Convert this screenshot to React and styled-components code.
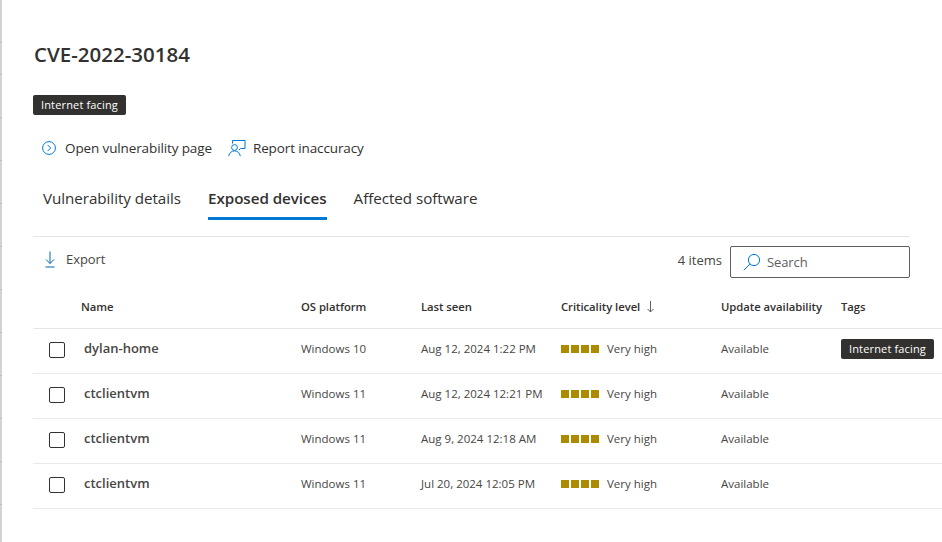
import React from 'react'
import styled, { createGlobalStyle } from 'styled-components'

const devices = [
    { name: 'dylan-home', os: 'Windows 10', seen: 'Aug 12, 2024 1:22 PM', internetFacing: true },
    { name: 'ctclientvm', os: 'Windows 11', seen: 'Aug 12, 2024 12:21 PM' },
    { name: 'ctclientvm', os: 'Windows 11', seen: 'Aug 9, 2024 12:18 AM' },
    { name: 'ctclientvm', os: 'Windows 11', seen: 'Jul 20, 2024 12:05 PM' },
]

const columns = '48px 220px 120px 140px 160px 120px 1fr'

const GlobalStyle = createGlobalStyle`
    html, body {
        margin: 0;
        padding: 0;
        background: #fff;
        overflow: hidden;
    }
    body {
        font-family: "Open Sans", "Noto Sans", sans-serif;
        color: #323130;
    }
`

const Page = styled.div`
    display: flex;
    width: 942px;
    height: 542px;
    overflow: hidden;
`

const Rail = styled.div`
    flex: 0 0 2px;
    background:
        linear-gradient(to bottom, #d2d2d2 0, #d2d2d2 42px, #bdbdbd 42px, #bdbdbd 43px, transparent 43px),
        repeating-linear-gradient(to bottom, #d2d2d2 0, #d2d2d2 31px, #bdbdbd 31px, #bdbdbd 32px, #d2d2d2 32px, #d2d2d2 43px);
`

const Main = styled.main`
    flex: 1;
    min-width: 0;
    padding: 42px 0 0 31px;
`

const Title = styled.h1`
    margin: 0 0 0 1px;
    font-size: 20.5px;
    line-height: 25px;
    font-weight: 600;
`

const Tag = styled.span`
    display: inline-block;
    height: 20px;
    padding: 0 8px;
    border-radius: 2px;
    background: #323130;
    color: #fff;
    font-size: 11px;
    line-height: 20px;
    letter-spacing: 0.15px;
    white-space: nowrap;
`

const TagRow = styled.div`
    display: flex;
    margin-top: 28px;
    height: 20px;
`

const Actions = styled.div`
    display: flex;
    align-items: center;
    gap: 16px;
    margin: 21px 0 0 9px;
    height: 24px;
`

const Action = styled.div`
    display: flex;
    align-items: center;
    gap: ${(p) => p.$gap}px;
    font-size: 13.5px;
    letter-spacing: -0.12px;
    white-space: nowrap;
`

const Tabs = styled.div`
    display: flex;
    gap: 27px;
    margin: 27px 0 0 10px;
`

const TabItem = styled.div`
    padding-bottom: 8px;
    font-size: 15.2px;
    line-height: 22px;
    font-weight: ${(p) => (p.$active ? 600 : 400)};
    letter-spacing: -0.05px;
    border-bottom: 3px solid ${(p) => (p.$active ? '#0078d4' : 'transparent')};
`

const Toolbar = styled.div`
    display: flex;
    align-items: center;
    justify-content: space-between;
    width: 877px;
    height: 46px;
    margin-top: 16px;
    border-top: 1px solid #e5e5e5;
`

const ExportButton = styled.div`
    display: flex;
    align-items: center;
    gap: 11px;
    margin: -2px 0 0 12px;
    font-size: 13px;
    letter-spacing: -0.05px;
    color: #484644;
`

const ToolbarRight = styled.div`
    display: flex;
    align-items: center;
    gap: 8px;
    margin-top: 4px;
`

const Count = styled.span`
    font-size: 13px;
    color: #484644;
    margin-top: -4px;
`

const SearchBox = styled.div`
    display: flex;
    align-items: center;
    gap: 6px;
    box-sizing: border-box;
    width: 180px;
    height: 32px;
    padding-left: 12px;
    border: 1px solid #605e5c;
    border-radius: 2px;
    font-size: 13px;
    letter-spacing: -0.1px;
    color: #605e5c;
`

const HeaderRow = styled.div`
    display: grid;
    grid-template-columns: ${columns};
    align-items: center;
    height: 43px;
    padding-top: 2px;
    border-bottom: 1px solid #e5e5e5;
    font-size: 11.3px;
    font-weight: 600;
    letter-spacing: -0.05px;
`

const HeadCell = styled.div`
    display: flex;
    align-items: center;
    gap: 7px;
    white-space: nowrap;
    grid-column: ${(p) => p.$col};
`

const Row = styled.div`
    display: grid;
    grid-template-columns: ${columns};
    align-items: center;
    height: 39px;
    padding-bottom: 5px;
    border-bottom: 1px solid #e9e9e9;
    font-size: 11.5px;
    color: #484644;
    white-space: nowrap;
`

const CheckBox = styled.span`
    display: block;
    box-sizing: border-box;
    width: 16px;
    height: 16px;
    margin: 3px 0 0 16px;
    border: 1px solid #323130;
    border-radius: 2px;
`

const DeviceName = styled.div`
    margin-top: -2px;
    padding-left: 3px;
    font-size: 13px;
    font-weight: 600;
    color: #484644;
`

const Criticality = styled.div`
    display: flex;
    align-items: center;
    gap: 8px;
`

const Squares = styled.div`
    display: flex;
    gap: 2px;
`

const Square = styled.span`
    width: 8px;
    height: 8px;
    background: #ad8b00;
`

const OpenIcon = () => (
    <svg width="14" height="14" viewBox="0 0 14 14" fill="none">
        <circle cx="7" cy="7" r="6.4" stroke="#0078d4" strokeWidth="1" />
        <path d="M5.6 3.9 8.7 7 5.6 10.1" stroke="#0078d4" strokeWidth="1" />
    </svg>
)

const ReportIcon = () => (
    <svg width="18" height="17" viewBox="0 0 18 17" fill="none" stroke="#0078d4" strokeWidth="1">
        <path d="M4.5 3.5V.5h12.5v8h-4.5l-1.6 1.6" />
        <circle cx="6.5" cy="7.5" r="2.9" />
        <path d="M.7 16.2c.5-3.2 2.8-5.3 5.8-5.3s5.3 2.1 5.8 5.3" />
    </svg>
)

const ExportIcon = () => (
    <svg width="10" height="17" viewBox="0 0 10 17" fill="none" stroke="#0067b8" strokeWidth="1">
        <path d="M5 .5v12M1 8.5l4 4 4-4M.5 16h9" />
    </svg>
)

const SearchIcon = () => (
    <svg width="18" height="18" viewBox="0 0 18 18" fill="none" stroke="#0078d4" strokeWidth="1">
        <circle cx="11" cy="7" r="5.6" />
        <path d="M7 11 .8 17.2" />
    </svg>
)

const SortIcon = () => (
    <svg width="7" height="12" viewBox="0 0 7 12" fill="none" stroke="#605e5c" strokeWidth="1">
        <path d="M3.5 0v11M.6 8l2.9 3 2.9-3" />
    </svg>
)

export default function App() {
    return (
        <Page>
            <GlobalStyle />
            <Rail />
            <Main>
                <Title>CVE-2022-30184</Title>
                <TagRow><Tag>Internet facing</Tag></TagRow>
                <Actions>
                    <Action $gap={9}><OpenIcon />Open vulnerability page</Action>
                    <Action $gap={7}><ReportIcon />Report inaccuracy</Action>
                </Actions>
                <Tabs>
                    <TabItem>Vulnerability details</TabItem>
                    <TabItem $active>Exposed devices</TabItem>
                    <TabItem>Affected software</TabItem>
                </Tabs>
                <Toolbar>
                    <ExportButton><ExportIcon />Export</ExportButton>
                    <ToolbarRight>
                        <Count>4 items</Count>
                        <SearchBox><SearchIcon />Search</SearchBox>
                    </ToolbarRight>
                </Toolbar>
                <HeaderRow>
                    <HeadCell $col={2}>Name</HeadCell>
                    <HeadCell>OS platform</HeadCell>
                    <HeadCell>Last seen</HeadCell>
                    <HeadCell>Criticality level <SortIcon /></HeadCell>
                    <HeadCell>Update availability</HeadCell>
                    <HeadCell>Tags</HeadCell>
                </HeaderRow>
                {devices.map((device) => (
                    <Row key={device.seen}>
                        <CheckBox />
                        <DeviceName>{device.name}</DeviceName>
                        <div>{device.os}</div>
                        <div>{device.seen}</div>
                        <Criticality>
                            <Squares>
                                {[0, 1, 2, 3].map((i) => <Square key={i} />)}
                            </Squares>
                            Very high
                        </Criticality>
                        <div>Available</div>
                        <div>{device.internetFacing && <Tag>Internet facing</Tag>}</div>
                    </Row>
                ))}
            </Main>
        </Page>
    )
}
